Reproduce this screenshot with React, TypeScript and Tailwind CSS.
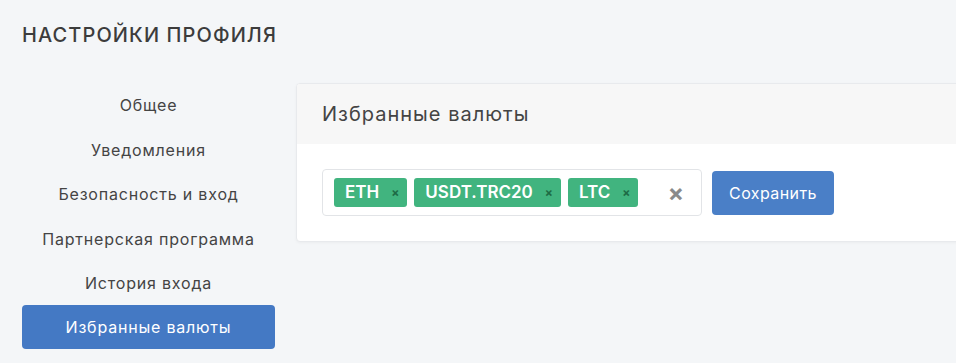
import React from "react";

const menu = [
  "Общее",
  "Уведомления",
  "Безопасность и вход",
  "Партнерская программа",
  "История входа",
];

const tags = ["ETH", "USDT.TRC20", "LTC"];

const Tag: React.FC<{ label: string }> = ({ label }) => (
  <span className="flex h-[29px] items-center rounded-[3px] bg-[#41b47f] pl-[11px] pr-[8px] text-[17px] font-semibold text-white">
    {label}
    <span className="ml-[12px] text-[12px] font-bold leading-none text-[#1d6b45]">×</span>
  </span>
);

export default function App() {
  return (
    <div
      className="h-[363px] w-[956px] overflow-hidden bg-[#f4f6f8] text-[#444]"
      style={{ fontFamily: "Inter, 'Noto Sans', sans-serif" }}
    >
      <h1 className="pl-[22px] pt-[20px] text-[20px] font-medium tracking-[1.1px] text-[#3c3c3c]">
        НАСТРОЙКИ ПРОФИЛЯ
      </h1>

      <div className="mt-[33px] flex gap-[21px] pl-[22px]">
        <nav className="flex w-[253px] shrink-0 flex-col">
          {menu.map((item) => (
            <div
              key={item}
              className="flex h-[44.5px] items-center justify-center text-[16px] tracking-[0.8px]"
            >
              {item}
            </div>
          ))}
          <div className="-mt-[1px] flex h-[44px] items-center justify-center rounded-[4px] bg-[#4479c4] text-[16px] tracking-[0.8px] text-white">
            Избранные валюты
          </div>
        </nav>

        <div className="h-[159px] w-[700px] shrink-0 overflow-hidden rounded-[4px] border border-[#e8eaed] bg-white shadow-[0_1px_3px_rgba(0,0,0,0.04)]">
          <div className="flex h-[60px] items-center bg-[#f7f7f7] px-[25px] text-[20px] tracking-[1px] text-[#444]">
            Избранные валюты
          </div>
          <div className="flex items-center gap-[10px] px-[25px] pt-[25px]">
            <div className="flex h-[47px] w-[380px] items-center rounded-[4px] border border-[#e2e4e7] pl-[11px] pr-[17px]">
              <div className="flex gap-[7px]">
                {tags.map((t) => (
                  <Tag key={t} label={t} />
                ))}
              </div>
              <span className="ml-auto text-[24px] font-bold leading-none text-[#8a8a8a]">×</span>
            </div>
            <button className="h-[44px] w-[122px] rounded-[4px] bg-[#4a7fc7] text-[16px] tracking-[0.4px] text-white">
              Сохранить
            </button>
          </div>
        </div>
      </div>
    </div>
  );
}
